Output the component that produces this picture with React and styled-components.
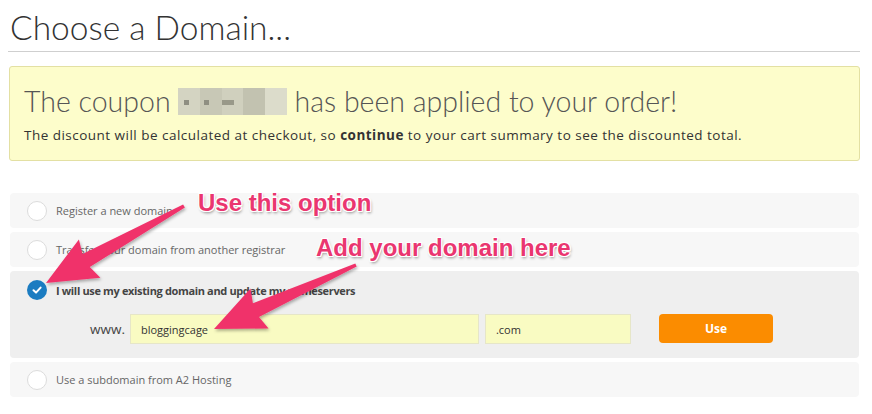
import React from "react";
import styled, { createGlobalStyle } from "styled-components";

const Global = createGlobalStyle`
  html, body { margin: 0; padding: 0; background: #fff; }
  body { font-family: "Open Sans", "Liberation Sans", sans-serif; }
`;

const Page = styled.div`
  position: relative;
  width: 872px;
  height: 414px;
  overflow: hidden;
`;

const Container = styled.div`
  width: 852px;
  margin-left: 8px;
  padding-top: 7px;
`;

const Title = styled.h1`
  margin: 0;
  font-family: "Lato", sans-serif;
  font-weight: 300;
  font-size: 33.5px;
  line-height: 40px;
  color: #333;
  padding-left: 2px;
`;

const Rule = styled.hr`
  margin: 4px 0 14px;
  border: 0;
  border-top: 1px solid #cfcfcf;
`;

const Alert = styled.div`
  margin-left: 1px;
  background: #fdfdcb;
  border: 1px solid #e3e0a3;
  border-radius: 3px;
  padding: 18px 14px 16px;
`;

const AlertHeading = styled.div`
  font-family: "Lato", sans-serif;
  font-weight: 300;
  font-size: 28.5px;
  line-height: 33px;
  color: #555;
  display: flex;
  align-items: center;
  white-space: nowrap;
`;

const Blur = styled.span`
  display: inline-block;
  width: 109px;
  height: 27px;
  margin: 0 8px 0 7px;
  background:
    linear-gradient(90deg, transparent 0 6px, #8f8f82 6px 11px, transparent 11px 26px, #8f8f82 26px 31px, transparent 31px 44px, #999989 44px 56px, transparent 56px) 0 12px / 100% 5px no-repeat,
    linear-gradient(90deg, #d4d4c2 0 20%, #c8c8b6 20% 40%, #d0d0be 40% 60%, #c2c2b0 60% 80%, #dcdccb 80%);
`;

const AlertText = styled.p`
  margin: 8px 0 0;
  font-size: 13.5px;
  letter-spacing: 0.48px;
  line-height: 18px;
  color: #333;
  white-space: nowrap;
  b { font-weight: 700; }
`;

const Options = styled.div`
  margin-top: 32px;
  margin-left: 2px;
  width: 849px;
  display: flex;
  flex-direction: column;
  gap: 4px;
`;

const Option = styled.div`
  background: ${(p) => (p.$selected ? "#efefef" : "#f7f7f7")};
  border-radius: 4px;
  padding: ${(p) => (p.$selected ? "0 0 14px" : "0")};
`;

const OptionHead = styled.div`
  display: flex;
  align-items: center;
  gap: 9px;
  height: ${(p) => (p.$selected ? "38px" : "35px")};
  padding-left: 17px;
`;

const Radio = styled.span`
  width: 20px;
  height: 20px;
  border-radius: 50%;
  box-sizing: border-box;
  background: #fff;
  border: 1px solid #dcdcdc;
  flex: none;
`;

const Checked = styled.span`
  width: 20px;
  height: 20px;
  border-radius: 50%;
  background: #1b7cc1;
  display: flex;
  align-items: center;
  justify-content: center;
  flex: none;
`;

const Label = styled.span`
  font-size: 11px;
  color: ${(p) => (p.$bold ? "#444" : "#666")};
  font-weight: ${(p) => (p.$bold ? 700 : 400)};
  letter-spacing: ${(p) => (p.$bold ? "-0.35px" : "0")};
`;

const InputRow = styled.div`
  display: flex;
  align-items: center;
  margin-top: 5px;
  padding-left: 80px;
`;

const Prefix = styled.span`
  font-size: 13.5px;
  color: #444;
  margin-right: 5px;
`;

const Field = styled.div`
  box-sizing: border-box;
  width: ${(p) => p.$w}px;
  height: 30px;
  background: #f9fbc2;
  border: 1px solid #e6e6c8;
  display: flex;
  align-items: center;
  padding-left: 10px;
  font-size: 11px;
  color: #333;
  margin-right: ${(p) => p.$mr || 0}px;
`;

const UseButton = styled.div`
  width: 114px;
  height: 29px;
  border-radius: 4px;
  background: #fb8c00;
  color: #fff;
  font-weight: 700;
  font-size: 12px;
  display: flex;
  align-items: center;
  justify-content: center;
  margin-top: -2px;
`;

const Overlay = styled.svg`
  position: absolute;
  left: 0;
  top: 0;
  pointer-events: none;
`;

const Note = styled.div`
  position: absolute;
  left: ${(p) => p.$x}px;
  top: ${(p) => p.$y}px;
  font-family: "Liberation Sans", Arial, sans-serif;
  font-weight: 700;
  font-size: 24px;
  line-height: 24px;
  color: #ea3670;
  white-space: nowrap;
  text-shadow:
    -1px -1px 0 #fff, 1px -1px 0 #fff, -1px 1px 0 #fff, 1px 1px 0 #fff,
    0 -1px 0 #fff, 0 1px 0 #fff, -1px 0 0 #fff, 1px 0 0 #fff,
    1px 2px 3px rgba(0, 0, 0, 0.45);
`;

const Check = () => (
  <svg width="12" height="12" viewBox="0 0 12 12">
    <path d="M2.5 6.3 L5 8.6 L9.6 3.6" fill="none" stroke="#fff" strokeWidth="2" strokeLinecap="round" strokeLinejoin="round" />
  </svg>
);

// Build a tapered arrow polygon from tail to tip
function arrowPoints(tx, ty, px, py, tailW, shaftW, headW, headL) {
  const dx = px - tx;
  const dy = py - ty;
  const len = Math.hypot(dx, dy);
  const ux = dx / len;
  const uy = dy / len;
  const nx = -uy;
  const ny = ux;
  const bx = px - ux * headL;
  const by = py - uy * headL;
  const pts = [
    [tx + nx * tailW, ty + ny * tailW],
    [bx + nx * shaftW, by + ny * shaftW],
    [bx + nx * headW - ux * 4, by + ny * headW - uy * 4],
    [px, py],
    [bx - nx * headW - ux * 4, by - ny * headW - uy * 4],
    [bx - nx * shaftW, by - ny * shaftW],
    [tx - nx * tailW, ty - ny * tailW],
  ];
  return pts.map((p) => p.map((v) => v.toFixed(1)).join(",")).join(" ");
}

export default function App() {
  return (
    <>
      <Global />
      <Page>
        <Container>
          <Title>Choose a Domain...</Title>
          <Rule />
          <Alert>
            <AlertHeading>
              The coupon<Blur /> has been applied to your order!
            </AlertHeading>
            <AlertText>
              The discount will be calculated at checkout, so <b>continue</b> to your cart summary to see the discounted total.
            </AlertText>
          </Alert>
          <Options>
            <Option>
              <OptionHead>
                <Radio />
                <Label>Register a new domain</Label>
              </OptionHead>
            </Option>
            <Option>
              <OptionHead>
                <Radio />
                <Label>Transfer your domain from another registrar</Label>
              </OptionHead>
            </Option>
            <Option $selected>
              <OptionHead $selected>
                <Checked>
                  <Check />
                </Checked>
                <Label $bold>I will use my existing domain and update my nameservers</Label>
              </OptionHead>
              <InputRow>
                <Prefix>www.</Prefix>
                <Field $w={349} $mr={6}>bloggingcage</Field>
                <Field $w={146} $mr={28}>.com</Field>
                <UseButton>Use</UseButton>
              </InputRow>
            </Option>
            <Option>
              <OptionHead>
                <Radio />
                <Label>Use a subdomain from A2 Hosting</Label>
              </OptionHead>
            </Option>
          </Options>
        </Container>
        <Overlay width="872" height="414" viewBox="0 0 872 414">
          <defs>
            <filter id="sh" x="-20%" y="-20%" width="140%" height="140%">
              <feDropShadow dx="1" dy="2" stdDeviation="1.5" floodColor="#000" floodOpacity="0.3" />
            </filter>
          </defs>
          <g fill="#f0336b" filter="url(#sh)">
            <polygon points={arrowPoints(184, 206, 46, 283, 1.8, 7.5, 22, 46)} />
            <polygon points={arrowPoints(356, 265, 214, 329, 1.8, 7.5, 22, 46)} />
          </g>
        </Overlay>
        <Note $x={198} $y={191}>Use this option</Note>
        <Note $x={316} $y={236}>Add your domain here</Note>
      </Page>
    </>
  );
}
